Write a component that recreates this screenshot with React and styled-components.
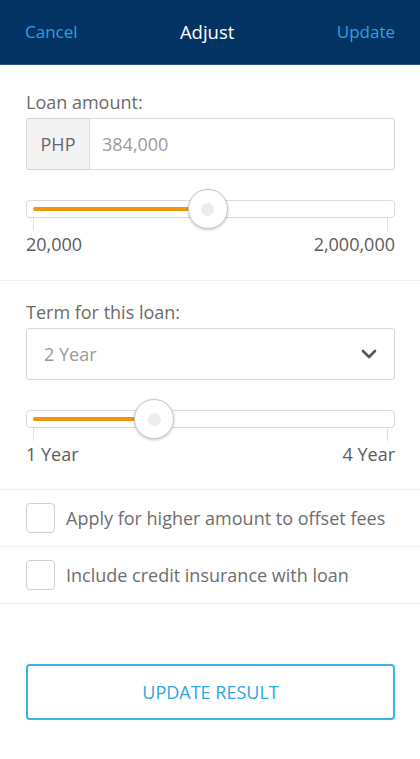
import React from 'react'
import styled, { createGlobalStyle } from 'styled-components'

const GlobalStyle = createGlobalStyle`
    html, body {
        margin: 0;
        padding: 0;
        background: #fff;
        font-family: "Open Sans", "Noto Sans", sans-serif;
    }
    * { box-sizing: border-box; }
`

const Page = styled.div`
    width: 420px;
    min-height: 759px;
    background: #fff;
`

const Header = styled.div`
    height: 65px;
    display: flex;
    align-items: center;
    justify-content: space-between;
    padding: 0 25px 2px;
    background: #033363;
    border-bottom: 1px solid #2d5680;
`

const HeaderLink = styled.span`
    font-size: 17px;
    color: #2f9fdc;
`

const HeaderTitle = styled.span`
    font-size: 18.5px;
    color: #fff;
`

const Section = styled.div`
    padding: ${p => p.$top}px 25px ${p => p.$bottom}px 26px;
    border-bottom: 1px solid #f0f0f0;
`

const Label = styled.div`
    font-size: 18px;
    line-height: 22px;
    color: #6b6b6b;
    margin-bottom: 5px;
`

const InputGroup = styled.div`
    display: flex;
    height: 52px;
    border: 1px solid #d6d6d6;
    border-radius: 3px;
    overflow: hidden;
`

const Addon = styled.div`
    width: 63px;
    display: flex;
    align-items: center;
    justify-content: center;
    background: #f3f3f3;
    border-right: 1px solid #dcdcdc;
    font-size: 18px;
    color: #666;
`

const Value = styled.div`
    flex: 1;
    display: flex;
    align-items: center;
    padding-left: 12px;
    font-size: 18px;
    color: #9a9a9a;
`

const Select = styled.div`
    height: 52px;
    display: flex;
    align-items: center;
    justify-content: space-between;
    padding: 0 17px 0 17px;
    border: 1px solid #d6d6d6;
    border-radius: 3px;
    font-size: 18px;
    color: #9a9a9a;
`

const SliderWrap = styled.div`
    margin-top: 30px;
`

const Track = styled.div`
    position: relative;
    height: 18px;
    border: 1px solid #dcdcdc;
    border-radius: 4px;
    background: #fff;
`

const Fill = styled.div`
    position: absolute;
    left: 6px;
    top: 6px;
    height: 4px;
    border-radius: 2px;
    background: #f0950d;
`

const Thumb = styled.div`
    position: absolute;
    top: 50%;
    width: 40px;
    height: 40px;
    margin: -20px 0 0 -20px;
    border-radius: 50%;
    background: #fff;
    border: 1px solid #c9c9c9;
    box-shadow: 0 1px 3px rgba(0, 0, 0, 0.22);
    display: flex;
    align-items: center;
    justify-content: center;

    &::after {
        content: '';
        width: 13px;
        height: 13px;
        border-radius: 50%;
        background: #ececec;
    }
`

const Ticks = styled.div`
    display: flex;
    justify-content: space-between;
    padding: 0 7px;
    height: 13px;
`

const Tick = styled.span`
    width: 1px;
    height: 13px;
    background: #e2e2e2;
`

const Range = styled.div`
    display: flex;
    justify-content: space-between;
    font-size: 18px;
    line-height: 22px;
    color: #5c5c5c;
    margin-top: 2px;
`

const CheckRow = styled.div`
    height: 57px;
    display: flex;
    align-items: center;
    gap: 11px;
    padding: 0 26px;
    border-bottom: 1px solid #f0f0f0;
    font-size: 18px;
    color: #6e6e6e;
`

const Box = styled.span`
    width: 29px;
    height: 30px;
    border: 1px solid #d0d0d0;
    border-radius: 4px;
    background: #fff;
    margin-bottom: 1px;
`

const ButtonArea = styled.div`
    padding: 60px 25px 0 26px;
`

const Button = styled.div`
    height: 56px;
    display: flex;
    align-items: center;
    justify-content: center;
    border: 2px solid #3bb3e6;
    border-radius: 4px;
    font-size: 18px;
    color: #2ea6dd;
`

function Slider({ percent, fill, min, max }) {
    return (
        <SliderWrap>
            <Track>
                <Fill style={{ width: fill + '%' }} />
                <Thumb style={{ left: percent + '%' }} />
            </Track>
            <Ticks><Tick /><Tick /></Ticks>
            <Range><span>{min}</span><span>{max}</span></Range>
        </SliderWrap>
    )
}

function Chevron() {
    return (
        <svg width="16" height="10" viewBox="0 0 16 10">
            <path d="M2 2l6 6 6-6" fill="none" stroke="#555" strokeWidth="2.6" strokeLinecap="round" strokeLinejoin="round" />
        </svg>
    )
}

export default function App() {
    return (
        <Page>
            <GlobalStyle />
            <Header>
                <HeaderLink>Cancel</HeaderLink>
                <HeaderTitle>Adjust</HeaderTitle>
                <HeaderLink>Update</HeaderLink>
            </Header>
            <Section $top={26} $bottom={25}>
                <Label>Loan amount:</Label>
                <InputGroup>
                    <Addon>PHP</Addon>
                    <Value>384,000</Value>
                </InputGroup>
                <Slider percent={49.3} fill={44} min="20,000" max="2,000,000" />
            </Section>
            <Section $top={20} $bottom={24}>
                <Label>Term for this loan:</Label>
                <Select>
                    <span>2 Year</span>
                    <Chevron />
                </Select>
                <Slider percent={34.7} fill={30} min="1 Year" max="4 Year" />
            </Section>
            <CheckRow>
                <Box />
                <span>Apply for higher amount to offset fees</span>
            </CheckRow>
            <CheckRow>
                <Box />
                <span>Include credit insurance with loan</span>
            </CheckRow>
            <ButtonArea>
                <Button>UPDATE RESULT</Button>
            </ButtonArea>
        </Page>
    )
}
